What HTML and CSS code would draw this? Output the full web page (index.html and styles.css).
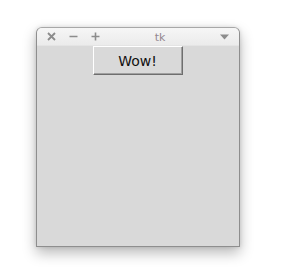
FILE: index.html
```html
<!DOCTYPE html>
<html>
<head>
<meta charset="utf-8">
<link rel="stylesheet" href="styles.css">
</head>
<body>
<div class="desk">
  <div class="win">
    <div class="titlebar">
      <div class="ctrls">
        <svg class="ic" width="9" height="9" viewBox="0 0 9 9"><path d="M1 1L8 8M8 1L1 8" stroke="#8c8c8c" stroke-width="1.8"/></svg>
        <svg class="ic" width="9" height="9" viewBox="0 0 9 9"><path d="M0.5 4.5H8.5" stroke="#8c8c8c" stroke-width="1.6"/></svg>
        <svg class="ic" width="9" height="9" viewBox="0 0 9 9"><path d="M0.5 4.5H8.5M4.5 0.5V8.5" stroke="#8c8c8c" stroke-width="1.6"/></svg>
      </div>
      <div class="title">tk</div>
      <svg class="menu" width="9" height="6" viewBox="0 0 9 6"><path d="M0 0.5H9L4.5 5.5Z" fill="#8c8c8c"/></svg>
    </div>
    <div class="content">
      <button class="btn">Wow!</button>
    </div>
  </div>
</div>
</body>
</html>
```
FILE: styles.css
```css
html, body {
  margin: 0;
  padding: 0;
  background: #ffffff;
}
.desk {
  width: 287px;
  height: 278px;
  padding: 27px 0 0 36px;
  box-sizing: border-box;
}
.win {
  width: 204px;
  height: 220px;
  box-sizing: border-box;
  border: 1px solid #8e8e8e;
  border-top-color: #a8a8a8;
  border-radius: 6px 6px 0 0;
  display: flex;
  flex-direction: column;
  box-shadow: 0 6px 14px rgba(0, 0, 0, 0.28), 0 0 4px rgba(0,0,0,0.12);
  overflow: hidden;
  background: #d9d9d9;
}
.titlebar {
  height: 17px;
  flex: none;
  background: linear-gradient(#f6f6f6, #ebebeb);
  display: flex;
  align-items: center;
  position: relative;
  border-bottom: 1px solid #e4e4e4;
}
.ctrls {
  display: flex;
  gap: 13px;
  padding-left: 10px;
  align-items: center;
}
.ic { display: block; }
.title {
  flex: 1;
  text-align: center;
  font-family: "DejaVu Sans", sans-serif;
  font-size: 11px;
  color: #948890;
  line-height: 17px;
  padding-top: 2px;
}
.menu {
  display: block;
  margin-right: 10px;
}
.content {
  flex: 1;
  display: flex;
  justify-content: center;
  align-items: flex-start;
  padding-right: 1px;
}
.btn {
  width: 90px;
  height: 29px;
  box-sizing: border-box;
  background: #d9d9d9;
  border: 1px solid;
  border-color: #ffffff #6e6e6e #6e6e6e #ffffff;
  box-shadow: inset -1px -1px 0 #a0a0a0;
  font-family: "DejaVu Sans", sans-serif;
  font-size: 14px;
  color: #111;
  padding: 0;
  margin: 0;
}
```
